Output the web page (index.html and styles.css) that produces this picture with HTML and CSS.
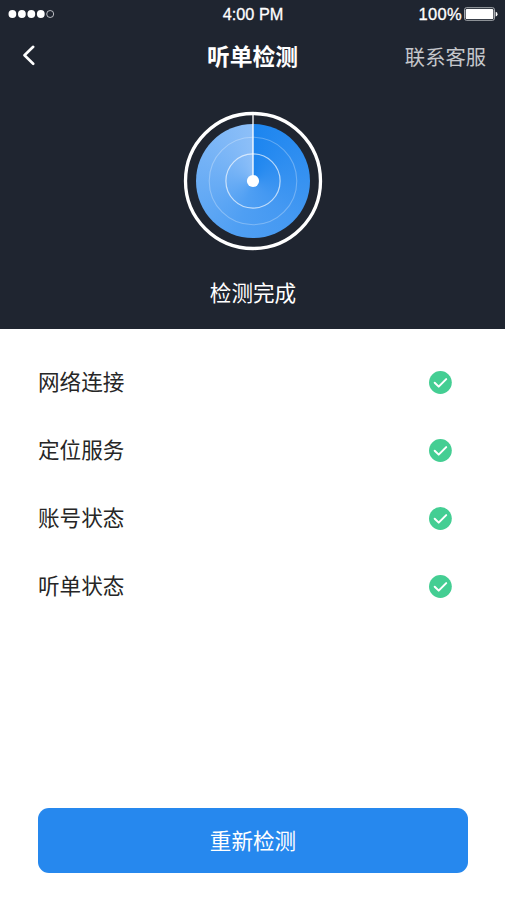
FILE: index.html
```html
<!DOCTYPE html>
<html lang="zh-CN">
<head>
<meta charset="utf-8">
<title>听单检测</title>
<link rel="stylesheet" href="styles.css">
</head>
<body>
<main class="screen">
  <header class="hero">
    <div class="status">
      <svg class="signal" width="48" height="10" viewBox="0 0 48 10" fill="#fff">
        <circle cx="4.4" cy="5" r="3.9"/><circle cx="13.9" cy="5" r="3.9"/><circle cx="23.3" cy="5" r="3.9"/><circle cx="32.8" cy="5" r="3.9"/>
        <circle cx="42.2" cy="5" r="3.5" fill="none" stroke="#dfe1e4" stroke-width=".8"/>
      </svg>
      <span class="time">4:00 PM</span>
      <div class="power">
        <span>100%</span>
        <svg width="34" height="14" viewBox="0 0 34 14">
          <rect x=".5" y=".7" width="30" height="12.6" rx="2" fill="none" stroke="#b9bcc0" stroke-width=".9"/>
          <rect x="1.7" y="1.9" width="27.6" height="10.2" rx="1.2" fill="#fff"/>
          <path d="M31.7 4.8a2.5 2.5 0 0 1 0 4.8z" fill="#fff"/>
        </svg>
      </div>
    </div>
    <nav class="nav">
      <svg class="back" width="14" height="22" viewBox="0 0 14 22" fill="none" stroke="#fff" stroke-width="2.6" stroke-linecap="round" stroke-linejoin="round"><path d="M11.2 1.8 2.5 10.3l8.7 8.5"/></svg>
      <h1 class="title">听单检测</h1>
      <a class="support">联系客服</a>
    </nav>
    <div class="radar">
      <div class="disc"></div>
      <svg class="rings" width="140" height="140" viewBox="0 0 140 140" fill="none" stroke="#fff">
        <circle cx="70" cy="70" r="67.5" stroke-width="3.3"/>
        <circle cx="70" cy="70" r="43.8" stroke-width="1.1" opacity=".28"/>
        <circle cx="70" cy="70" r="27.1" stroke-width="1.2" opacity=".65"/>
        <path d="M70 3v67" stroke-width="1.5" opacity=".88"/>
        <circle cx="70" cy="70" r="6.1" fill="#fff" stroke="none"/>
      </svg>
    </div>
    <p class="result">检测完成</p>
  </header>
  <ul class="checks">
    <li class="check"><span>网络连接</span><svg class="ok" viewBox="0 0 24 24"><circle cx="12.4" cy="12.5" r="11.4"/><path d="m6.7 12.8 4 3.8 7.5-7.5"/></svg></li>
    <li class="check"><span>定位服务</span><svg class="ok" viewBox="0 0 24 24"><circle cx="12.4" cy="12.5" r="11.4"/><path d="m6.7 12.8 4 3.8 7.5-7.5"/></svg></li>
    <li class="check"><span>账号状态</span><svg class="ok" viewBox="0 0 24 24"><circle cx="12.4" cy="12.5" r="11.4"/><path d="m6.7 12.8 4 3.8 7.5-7.5"/></svg></li>
    <li class="check"><span>听单状态</span><svg class="ok" viewBox="0 0 24 24"><circle cx="12.4" cy="12.5" r="11.4"/><path d="m6.7 12.8 4 3.8 7.5-7.5"/></svg></li>
  </ul>
  <button class="retry">重新检测</button>
</main>
</body>
</html>
```
FILE: styles.css
```css
* {
  box-sizing: border-box;
}

body {
  margin: 0;
  background: #fff;
  color: #262626;
  font-family: "Noto Sans CJK SC", sans-serif;
}

.screen {
  display: flex;
  flex-direction: column;
  height: 900px;
}

.hero {
  display: flex;
  flex-direction: column;
  height: 329px;
  background: #1f2530;
  color: #fff;
}

.status {
  display: grid;
  grid-template-columns: 1fr auto 1fr;
  align-items: center;
  height: 28px;
  padding: 0 7px 0 8px;
  font: 16.3px/28px "Liberation Sans", sans-serif;
  -webkit-text-stroke: 0.3px #fff;
}

.power {
  display: flex;
  align-items: center;
  justify-content: flex-end;
  gap: 2px;
}

.power span {
  font-size: 16.5px;
  letter-spacing: 0.3px;
}

.status svg {
  display: block;
}

.nav {
  display: grid;
  grid-template-columns: 1fr auto 1fr;
  align-items: center;
  height: 56px;
  padding: 0 19px;
}

.back {
  margin-left: 3px;
}

.title {
  margin: 0;
  font-size: 22.8px;
  font-weight: 700;
  line-height: 56px;
}

.support {
  justify-self: end;
  color: #c5c7cb;
  font-size: 20.3px;
}

.radar {
  position: relative;
  display: grid;
  place-items: center;
  align-self: center;
  width: 140px;
  height: 140px;
  margin-top: 27px;
}

.disc {
  width: 114px;
  height: 114px;
  border-radius: 50%;
  background: conic-gradient(#1c85ef, #4599f2 38%, #4f9ff3 55%, #8dbff8);
}

.rings {
  position: absolute;
  inset: 0;
}

.result {
  margin: 24px 0 0 1px;
  font-size: 21.6px;
  line-height: 33px;
  text-align: center;
}

.checks {
  margin: 0;
  padding: 19px 53px 0 38px;
  list-style: none;
}

.check {
  display: flex;
  align-items: center;
  justify-content: space-between;
  height: 68px;
  font-size: 21.6px;
}

.check span {
  padding-bottom: 3px;
}

.ok {
  width: 24px;
  height: 24px;
  fill: #44ce93;
}

.ok path {
  fill: none;
  stroke: #fff;
  stroke-width: 2;
  stroke-linecap: round;
  stroke-linejoin: round;
}

.retry {
  height: 65px;
  margin: auto 37px 27px 38px;
  padding: 0 0 2px;
  border: 0;
  border-radius: 11px;
  background: #2688ee;
  color: #fff;
  font: inherit;
  font-size: 21.6px;
}
```
